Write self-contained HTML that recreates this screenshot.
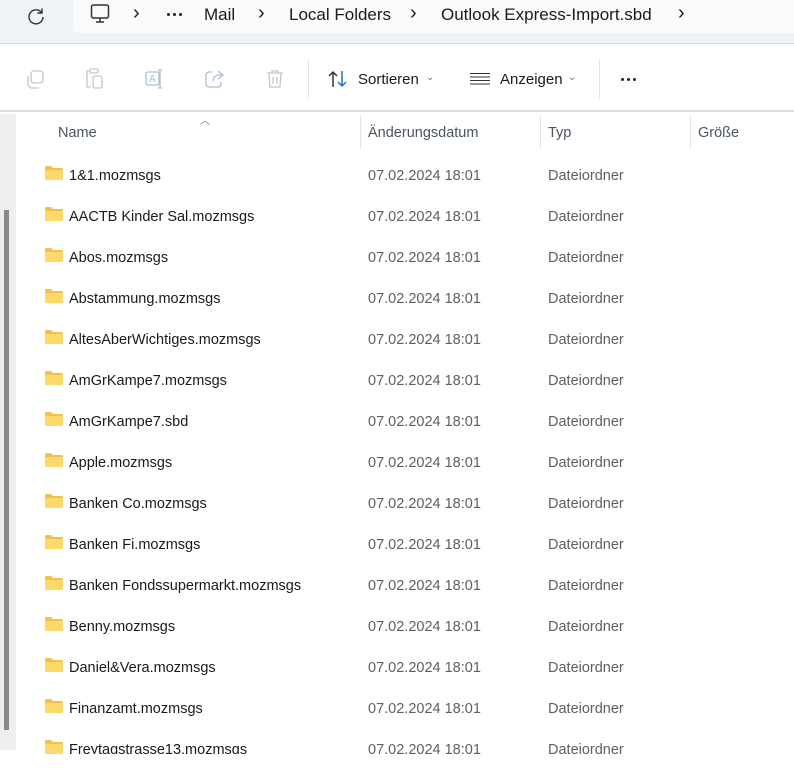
<!DOCTYPE html>
<html><head><meta charset="utf-8"><style>
*{margin:0;padding:0;box-sizing:border-box}
body{width:794px;height:778px;background:#fff;font-family:"Liberation Sans",sans-serif;position:relative;overflow:hidden;color:#1a1a1a}
.top{position:absolute;left:0;top:0;width:794px;height:44px;background:#eef3f6;border-bottom:1px solid #d3dade}
.addr{position:absolute;left:73px;top:0;width:721px;height:33px;background:#f9fbfc;border-radius:0 0 0 6px}
.t{position:absolute;white-space:nowrap}
.bc{font-size:17px;top:5px;color:#1a1a1a}
.ch{font-size:20px;top:2px}
.tb{position:absolute;left:0;top:45px;width:794px;height:67px;background:#fff;border-bottom:2px solid #d8dfe2}
.left{position:absolute;left:0;top:114px;width:16px;height:636px;background:#efefef}
.sb{position:absolute;left:4px;top:210px;width:5px;height:520px;background:#8a8a8a}
.hd{font-size:14.5px;color:#4a5560;top:125px}
.sep{position:absolute;top:115px;width:1px;height:33px;background:#e5e5e5}
.row{position:absolute;left:0;width:794px;height:41px;font-size:14.5px}
.row .n{position:absolute;left:69px;top:2px;color:#1a1a1a}
.row .d{position:absolute;left:368px;top:2px;color:#5f5f5f}
.row .y{position:absolute;left:548px;top:2px;color:#5f5f5f}
.fold{position:absolute;left:45px;top:0px;width:18px;height:14px}
.dots{position:absolute;display:flex;gap:3px}
.dots i{display:block;width:3px;height:3px;border-radius:50%;background:#222}
</style></head><body>
<div class="top"><div class="addr"></div></div>
<svg class="t" style="left:26px;top:6px" width="20" height="20" viewBox="0 0 20 20"><path d="M15.5 6.5A7 7 0 1 0 17 11" fill="none" stroke="#333" stroke-width="1.4"/><path d="M16 2.5v4.5h-4.5" fill="none" stroke="#333" stroke-width="1.4"/></svg>
<svg class="t" style="left:90px;top:4px" width="22" height="20" viewBox="0 0 22 20"><rect x="1.5" y="1" width="17" height="13" rx="2" fill="none" stroke="#333" stroke-width="1.5"/><path d="M6 18h8M10 14v4" stroke="#333" stroke-width="1.5"/></svg>
<div class="t bc ch" style="left:133px">›</div>
<div class="dots" style="left:167px;top:13px"><i></i><i></i><i></i></div>
<div class="t bc" style="left:204px">Mail</div>
<div class="t bc ch" style="left:258px">›</div>
<div class="t bc" style="left:289px">Local Folders</div>
<div class="t bc ch" style="left:410px">›</div>
<div class="t bc" style="left:441px">Outlook Express-Import.sbd</div>
<div class="t bc ch" style="left:678px">›</div>
<div class="tb"></div>
<svg class="t" style="left:24px;top:69px" width="22" height="22" viewBox="0 0 22 22" fill="none" stroke="#c4c8cc" stroke-width="1.3"><rect x="7" y="2" width="12" height="12" rx="3"/><path d="M4 7v8a4 4 0 0 0 4 4h7"/></svg>
<svg class="t" style="left:84px;top:67px" width="22" height="24" viewBox="0 0 22 24" fill="none" stroke="#c4c8cc" stroke-width="1.3"><path d="M6 4H3v16h4"/><rect x="6" y="2" width="8" height="4" rx="1"/><rect x="9" y="9" width="9" height="12" rx="2"/></svg>
<svg class="t" style="left:144px;top:68px" width="24" height="22" viewBox="0 0 24 22" fill="none" stroke="#aebfcf" stroke-width="1.3"><rect x="2" y="4" width="13" height="13" rx="2"/><path d="M16 2v18M14 2h4M14 20h4"/><text x="5" y="14" font-size="10" fill="#aebfcf" stroke="none" font-family="Liberation Sans">A</text></svg>
<svg class="t" style="left:204px;top:68px" width="22" height="22" viewBox="0 0 22 22" fill="none" stroke="#aebfcf" stroke-width="1.3"><path d="M8 4H5a3 3 0 0 0-3 3v9a3 3 0 0 0 3 3h9a3 3 0 0 0 3-3v-2"/><path d="M14 3l5 4-5 4M19 7h-4a6 6 0 0 0-6 6"/></svg>
<svg class="t" style="left:264px;top:68px" width="22" height="22" viewBox="0 0 22 22" fill="none" stroke="#c4c8cc" stroke-width="1.3"><path d="M3 5h16M8 5V3h6v2M5 5l1 14h10l1-14M9 9v7M13 9v7"/></svg>
<div style="position:absolute;left:308px;top:59px;width:1px;height:40px;background:#e3e3e3"></div>
<svg class="t" style="left:327px;top:69px" width="22" height="20" viewBox="0 0 22 20" fill="none" stroke-width="1.5"><path d="M6 18V3M2 7l4-4 4 4" stroke="#333"/><path d="M15 2v15M11 13l4 4 4-4" stroke="#1a73c8"/></svg>
<div class="t" style="left:358px;top:71px;font-size:15px">Sortieren</div>
<div class="t" style="left:426px;top:72px;font-size:10px;color:#777">⌄</div>
<svg class="t" style="left:469px;top:72px" width="22" height="14" viewBox="0 0 22 14" stroke="#333" stroke-width="1"><path d="M1 1.5h20M1 5h20M1 8.5h20M1 12h20"/></svg>
<div class="t" style="left:500px;top:71px;font-size:15px">Anzeigen</div>
<div class="t" style="left:568px;top:72px;font-size:10px;color:#777">⌄</div>
<div style="position:absolute;left:599px;top:59px;width:1px;height:40px;background:#e3e3e3"></div>
<div class="dots" style="left:621px;top:78px"><i></i><i></i><i></i></div>
<div class="left"></div><div class="sb"></div>
<div class="t" style="left:200px;top:112px;font-size:10px;color:#777">︿</div>
<div class="t hd" style="left:58px">Name</div>
<div class="sep" style="left:360px"></div>
<div class="t hd" style="left:368px">Änderungsdatum</div>
<div class="sep" style="left:540px"></div>
<div class="t hd" style="left:548px">Typ</div>
<div class="sep" style="left:690px"></div>
<div class="t hd" style="left:698px">Größe</div>
<div id="rows"></div>
<div style="position:absolute;left:0;top:754px;width:794px;height:24px;background:#fff"></div>
<script>
var n=["1&amp;1.mozmsgs","AACTB Kinder Sal.mozmsgs","Abos.mozmsgs","Abstammung.mozmsgs","AltesAberWichtiges.mozmsgs","AmGrKampe7.mozmsgs","AmGrKampe7.sbd","Apple.mozmsgs","Banken Co.mozmsgs","Banken Fi.mozmsgs","Banken Fondssupermarkt.mozmsgs","Benny.mozmsgs","Daniel&amp;Vera.mozmsgs","Finanzamt.mozmsgs","Freytagstrasse13.mozmsgs"];
var h="";
for(var i=0;i<n.length;i++){var y=166+i*41;
h+='<div class="row" style="top:'+y+'px"><svg class="fold" viewBox="0 0 18 14"><path d="M0 1.5Q0 0 1.5 0H6l2 2h8.5Q18 2 18 3.5V12.5Q18 14 16.5 14H1.5Q0 14 0 12.5Z" fill="#f0c24a"/><path d="M0 4h18v8.5Q18 14 16.5 14H1.5Q0 14 0 12.5Z" fill="#fcd96a"/></svg><span class="n">'+n[i]+'</span><span class="d">07.02.2024 18:01</span><span class="y">Dateiordner</span></div>';}
document.getElementById("rows").innerHTML=h;
</script>
</body></html>
